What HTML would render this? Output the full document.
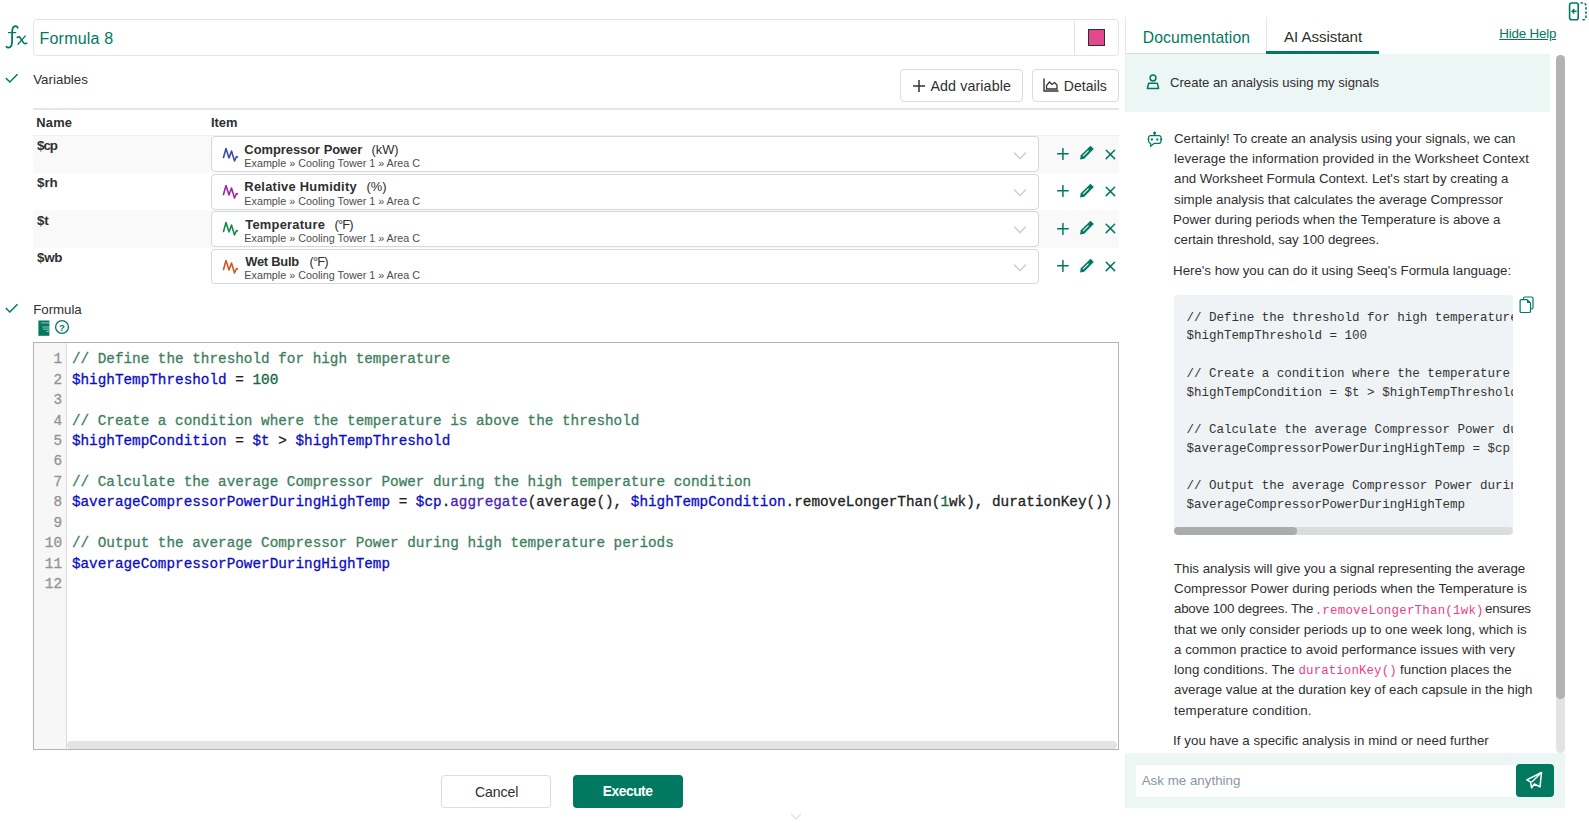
<!DOCTYPE html>
<html><head><meta charset="utf-8">
<style>
*{box-sizing:border-box;margin:0;padding:0}
html,body{width:1589px;height:823px;overflow:hidden;background:#fff;font-family:"Liberation Sans",sans-serif;color:#2f2f2f}
.a{position:absolute}
.nw{white-space:nowrap}
.teal{color:#007960}
.btn{position:absolute;border:1px solid #d9dde1;border-radius:4px;background:#fff}
.sel{position:absolute;border:1px solid #d3d8dd;border-radius:4px;background:#fff}
.code{font-family:"Liberation Mono",monospace;font-size:14.33px;-webkit-text-stroke:0.3px currentColor}
.code div{position:absolute;height:20px;line-height:20px;white-space:pre}
.cm{color:#3f7f5f}.vb{color:#0d0dc4}.nm{color:#116644}.fn{color:#4b1fb0}.pn{color:#222}
.ln{color:#939393;text-align:right}
.p{font-size:13.3px;line-height:16px;color:#333}
.cb{font-family:"Liberation Mono",monospace;font-size:12.55px;color:#333}
.cb div{position:absolute;white-space:pre;line-height:16px}
.ic{color:#e83e8c;font-family:"Liberation Mono",monospace;font-size:12.4px;line-height:16px}
</style></head><body>

<svg class="a" style="left:0;top:0" width="32" height="52" viewBox="0 0 32 52"><path d="M17.7 27.8C17.3 26.4 15.9 25.8 14.5 26.3C12.8 27 12.3 28.9 12.2 31.5L12 42.5C11.9 45.6 10.6 47.4 8.6 47.6C7.4 47.7 6.7 47.2 6.4 46.7" fill="none" stroke="#007960" stroke-width="1.8" stroke-linecap="round"/><path d="M8 32.6H16.2" stroke="#007960" stroke-width="1.2"/><path d="M17.3 37.4C18.6 36.4 19.7 36.8 20.6 38.4L23.4 42.6C24.3 43.9 25.4 43.9 26.7 43.1" fill="none" stroke="#007960" stroke-width="1.7" stroke-linecap="round"/><path d="M25.4 35.9L18 44.3" stroke="#007960" stroke-width="1.3" stroke-linecap="round"/></svg>
<div class="a" style="left:33px;top:19px;width:1086px;height:37px;border:1px solid #e2e4e7;border-radius:4px"></div>
<div class="a" style="left:1074px;top:20px;width:1px;height:35px;background:#e2e4e7"></div>
<div class="a" style="left:1088px;top:29px;width:17px;height:17px;background:#e0498c;border:1px solid #2f2f2f"></div>
<div id="f8" class="a nw" style="left:39.55px;top:29.00px;letter-spacing:0.203px;font-size:16px;line-height:20px;color:#007960">Formula 8</div>
<svg class="a" style="left:5px;top:73px" width="14" height="11" viewBox="0 0 14 11"><path d="M0.8 5 L4.8 9 L12.5 1.2" fill="none" stroke="#007960" stroke-width="1.5"/></svg>
<div id="vars" class="a nw" style="left:33.18px;top:71.60px;letter-spacing:0.034px;font-size:13.3px;line-height:16px">Variables</div>
<div class="btn" style="left:900px;top:69px;width:123px;height:33px"></div>
<svg class="a" style="left:912px;top:79px" width="14" height="14" viewBox="0 0 14 14"><path d="M7 1V13M1 7H13" stroke="#333" stroke-width="1.5"/></svg>
<div id="addv" class="a nw" style="left:930.45px;top:78.30px;letter-spacing:0.090px;font-size:14.3px;line-height:17px">Add variable</div>
<div class="btn" style="left:1032px;top:69px;width:87px;height:33px"></div>
<svg class="a" style="left:1043px;top:78px" width="16" height="14" viewBox="0 0 16 14"><path d="M1 0.5V13H15.5" fill="none" stroke="#333" stroke-width="1.4"/><path d="M3.5 11V7.5L6.5 4L9 6.5L11.5 4.5L14 7V11Z" fill="none" stroke="#333" stroke-width="1.3"/></svg>
<div id="det" class="a nw" style="left:1063.82px;top:78.30px;letter-spacing:0.030px;font-size:14px;line-height:17px">Details</div>
<div class="a" style="left:33px;top:108px;width:1086px;height:2px;background:#e3e7eb"></div>
<div id="hname" class="a nw" style="left:36.18px;top:115.00px;letter-spacing:0.240px;font-size:12.9px;line-height:16px;font-weight:bold">Name</div>
<div id="hitem" class="a nw" style="left:211.00px;top:115.00px;font-size:12.9px;line-height:16px;font-weight:bold">Item</div>
<div class="a" style="left:33px;top:135px;width:1086px;height:1px;background:#eef0f2"></div>
<div class="a" style="left:33px;top:135.6px;width:1086px;height:37.4px;background:#f9f9f9"></div>
<div id="rn0" class="a nw" style="left:37.08px;top:138.00px;letter-spacing:-1.080px;font-size:13.4px;line-height:16px;font-weight:bold">$cp</div>
<div class="sel" style="left:211px;top:136.4px;width:828px;height:35.8px"></div>
<svg class="a" style="left:222px;top:146.6px" width="17" height="16" viewBox="0 0 17 16"><path d="M1.5 10.5L4 1.5L7 11L9.5 4L12.5 14L14.5 9.5L15.5 10" fill="none" stroke="#3b4fa8" stroke-width="1.6" stroke-linejoin="round" stroke-linecap="round"/></svg>
<div id="rt0" class="a nw" style="left:244.36px;top:141.80px;letter-spacing:-0.018px;font-size:12.9px;line-height:16px;font-weight:bold">Compressor Power</div>
<div id="ru0" class="a nw" style="left:371.49px;top:141.80px;letter-spacing:-0.030px;font-size:12.9px;line-height:16px">(kW)</div>
<div id="re0" class="a nw" style="left:244.36px;top:157.10px;letter-spacing:0.008px;font-size:10.76px;line-height:13px;color:#4d4d4d">Example » Cooling Tower 1 » Area C</div>
<svg class="a" style="left:1013px;top:150.6px" width="14" height="9" viewBox="0 0 14 9"><path d="M1 1.5L7 7.5L13 1.5" fill="none" stroke="#cfd3d7" stroke-width="1.6"/></svg>
<svg class="a" style="left:1056.5px;top:147.8px" width="12" height="12" viewBox="0 0 12 12"><path d="M5.9 0.6V11.4M0.6 5.8H11.2" stroke="#007960" stroke-width="1.5" stroke-linecap="round"/></svg>
<svg class="a" style="left:1079px;top:145.3px" width="16" height="15" viewBox="0 0 16 15"><path d="M11.5 0.8L14.8 4.1L5.2 13.7L1 14.5L1.8 10.3Z" fill="#007960"/><path d="M4 11.2L9.5 5.7" stroke="#fff" stroke-width="1.1"/></svg>
<svg class="a" style="left:1105.3px;top:148.5px" width="11" height="11" viewBox="0 0 11 11"><path d="M1.2 1.2L9.6 9.6M9.6 1.2L1.2 9.6" stroke="#007960" stroke-width="1.5" stroke-linecap="round"/></svg>
<div id="rn1" class="a nw" style="left:37.08px;top:175.40px;letter-spacing:-0.090px;font-size:13.4px;line-height:16px;font-weight:bold">$rh</div>
<div class="sel" style="left:211px;top:173.8px;width:828px;height:35.8px"></div>
<svg class="a" style="left:222px;top:184.0px" width="17" height="16" viewBox="0 0 17 16"><path d="M1.5 10.5L4 1.5L7 11L9.5 4L12.5 14L14.5 9.5L15.5 10" fill="none" stroke="#9c2a9e" stroke-width="1.6" stroke-linejoin="round" stroke-linecap="round"/></svg>
<div id="rt1" class="a nw" style="left:244.36px;top:179.20px;letter-spacing:0.259px;font-size:12.9px;line-height:16px;font-weight:bold">Relative Humidity</div>
<div id="ru1" class="a nw" style="left:366.50px;top:179.20px;font-size:12.9px;line-height:16px">(%)</div>
<div id="re1" class="a nw" style="left:244.36px;top:194.50px;letter-spacing:0.008px;font-size:10.76px;line-height:13px;color:#4d4d4d">Example » Cooling Tower 1 » Area C</div>
<svg class="a" style="left:1013px;top:188.0px" width="14" height="9" viewBox="0 0 14 9"><path d="M1 1.5L7 7.5L13 1.5" fill="none" stroke="#cfd3d7" stroke-width="1.6"/></svg>
<svg class="a" style="left:1056.5px;top:185.2px" width="12" height="12" viewBox="0 0 12 12"><path d="M5.9 0.6V11.4M0.6 5.8H11.2" stroke="#007960" stroke-width="1.5" stroke-linecap="round"/></svg>
<svg class="a" style="left:1079px;top:182.7px" width="16" height="15" viewBox="0 0 16 15"><path d="M11.5 0.8L14.8 4.1L5.2 13.7L1 14.5L1.8 10.3Z" fill="#007960"/><path d="M4 11.2L9.5 5.7" stroke="#fff" stroke-width="1.1"/></svg>
<svg class="a" style="left:1105.3px;top:185.9px" width="11" height="11" viewBox="0 0 11 11"><path d="M1.2 1.2L9.6 9.6M9.6 1.2L1.2 9.6" stroke="#007960" stroke-width="1.5" stroke-linecap="round"/></svg>
<div class="a" style="left:33px;top:210.4px;width:1086px;height:37.4px;background:#f9f9f9"></div>
<div id="rn2" class="a nw" style="left:37.08px;top:212.80px;letter-spacing:-0.360px;font-size:13.4px;line-height:16px;font-weight:bold">$t</div>
<div class="sel" style="left:211px;top:211.2px;width:828px;height:35.8px"></div>
<svg class="a" style="left:222px;top:221.4px" width="17" height="16" viewBox="0 0 17 16"><path d="M1.5 10.5L4 1.5L7 11L9.5 4L12.5 14L14.5 9.5L15.5 10" fill="none" stroke="#1a8a4a" stroke-width="1.6" stroke-linejoin="round" stroke-linecap="round"/></svg>
<div id="rt2" class="a nw" style="left:245.26px;top:216.60px;letter-spacing:0.243px;font-size:12.9px;line-height:16px;font-weight:bold">Temperature</div>
<div id="ru2" class="a nw" style="left:334.47px;top:216.60px;letter-spacing:-0.810px;font-size:12.9px;line-height:16px">(°F)</div>
<div id="re2" class="a nw" style="left:244.36px;top:231.90px;letter-spacing:0.008px;font-size:10.76px;line-height:13px;color:#4d4d4d">Example » Cooling Tower 1 » Area C</div>
<svg class="a" style="left:1013px;top:225.4px" width="14" height="9" viewBox="0 0 14 9"><path d="M1 1.5L7 7.5L13 1.5" fill="none" stroke="#cfd3d7" stroke-width="1.6"/></svg>
<svg class="a" style="left:1056.5px;top:222.6px" width="12" height="12" viewBox="0 0 12 12"><path d="M5.9 0.6V11.4M0.6 5.8H11.2" stroke="#007960" stroke-width="1.5" stroke-linecap="round"/></svg>
<svg class="a" style="left:1079px;top:220.1px" width="16" height="15" viewBox="0 0 16 15"><path d="M11.5 0.8L14.8 4.1L5.2 13.7L1 14.5L1.8 10.3Z" fill="#007960"/><path d="M4 11.2L9.5 5.7" stroke="#fff" stroke-width="1.1"/></svg>
<svg class="a" style="left:1105.3px;top:223.3px" width="11" height="11" viewBox="0 0 11 11"><path d="M1.2 1.2L9.6 9.6M9.6 1.2L1.2 9.6" stroke="#007960" stroke-width="1.5" stroke-linecap="round"/></svg>
<div id="rn3" class="a nw" style="left:37.08px;top:250.20px;letter-spacing:-0.360px;font-size:13.4px;line-height:16px;font-weight:bold">$wb</div>
<div class="sel" style="left:211px;top:248.6px;width:828px;height:35.8px"></div>
<svg class="a" style="left:222px;top:258.8px" width="17" height="16" viewBox="0 0 17 16"><path d="M1.5 10.5L4 1.5L7 11L9.5 4L12.5 14L14.5 9.5L15.5 10" fill="none" stroke="#d4572a" stroke-width="1.6" stroke-linejoin="round" stroke-linecap="round"/></svg>
<div id="rt3" class="a nw" style="left:245.26px;top:254.00px;letter-spacing:-0.244px;font-size:12.9px;line-height:16px;font-weight:bold">Wet Bulb</div>
<div id="ru3" class="a nw" style="left:309.45px;top:254.00px;letter-spacing:-0.810px;font-size:12.9px;line-height:16px">(°F)</div>
<div id="re3" class="a nw" style="left:244.36px;top:269.30px;letter-spacing:0.008px;font-size:10.76px;line-height:13px;color:#4d4d4d">Example » Cooling Tower 1 » Area C</div>
<svg class="a" style="left:1013px;top:262.8px" width="14" height="9" viewBox="0 0 14 9"><path d="M1 1.5L7 7.5L13 1.5" fill="none" stroke="#cfd3d7" stroke-width="1.6"/></svg>
<svg class="a" style="left:1056.5px;top:260.0px" width="12" height="12" viewBox="0 0 12 12"><path d="M5.9 0.6V11.4M0.6 5.8H11.2" stroke="#007960" stroke-width="1.5" stroke-linecap="round"/></svg>
<svg class="a" style="left:1079px;top:257.5px" width="16" height="15" viewBox="0 0 16 15"><path d="M11.5 0.8L14.8 4.1L5.2 13.7L1 14.5L1.8 10.3Z" fill="#007960"/><path d="M4 11.2L9.5 5.7" stroke="#fff" stroke-width="1.1"/></svg>
<svg class="a" style="left:1105.3px;top:260.7px" width="11" height="11" viewBox="0 0 11 11"><path d="M1.2 1.2L9.6 9.6M9.6 1.2L1.2 9.6" stroke="#007960" stroke-width="1.5" stroke-linecap="round"/></svg>
<svg class="a" style="left:5px;top:303px" width="14" height="11" viewBox="0 0 14 11"><path d="M0.8 5 L4.8 9 L12.5 1.2" fill="none" stroke="#007960" stroke-width="1.5"/></svg>
<div id="form" class="a nw" style="left:33.27px;top:301.60px;letter-spacing:-0.060px;font-size:13.3px;line-height:16px">Formula</div>
<svg class="a" style="left:38px;top:320px" width="12" height="16" viewBox="0 0 12 16"><path d="M0.4 0.5H11.4V15.8H0.4Z" fill="#007960"/><path d="M3 2.9H11.4M4.3 7H11.4M4.9 9.1H11.4M8 11.3H11.4" stroke="#fff" stroke-width="0.8" opacity="0.75"/></svg>
<svg class="a" style="left:54px;top:319px" width="16" height="16" viewBox="0 0 16 16"><circle cx="8" cy="8" r="6.4" fill="none" stroke="#007960" stroke-width="1.3"/><text x="8" y="11.5" text-anchor="middle" font-family="Liberation Sans" font-weight="bold" font-size="9.5" fill="#007960">?</text></svg>
<div class="a" style="left:33px;top:342px;width:1086px;height:408px;border:1px solid #b3b3b3;background:#fff"></div>
<div class="a" style="left:34px;top:343px;width:33px;height:406px;background:#f7f7f7;border-right:1px solid #ddd"></div>
<div class="a" style="left:67px;top:741px;width:1050px;height:8px;background:#e3e3e3;border-radius:4px"></div>
<div class="code">
<div class="ln" style="left:34px;width:28px;top:349.20px">1</div>
<div style="left:71.9px;top:349.20px"><span class="cm">// Define the threshold for high temperature</span></div>
<div class="ln" style="left:34px;width:28px;top:369.64px">2</div>
<div style="left:71.9px;top:369.64px"><span class="vb">$highTempThreshold</span><span class="pn"> = </span><span class="nm">100</span></div>
<div class="ln" style="left:34px;width:28px;top:390.08px">3</div>
<div style="left:71.9px;top:390.08px"></div>
<div class="ln" style="left:34px;width:28px;top:410.52px">4</div>
<div style="left:71.9px;top:410.52px"><span class="cm">// Create a condition where the temperature is above the threshold</span></div>
<div class="ln" style="left:34px;width:28px;top:430.96px">5</div>
<div style="left:71.9px;top:430.96px"><span class="vb">$highTempCondition</span><span class="pn"> = </span><span class="vb">$t</span><span class="pn"> &gt; </span><span class="vb">$highTempThreshold</span></div>
<div class="ln" style="left:34px;width:28px;top:451.40px">6</div>
<div style="left:71.9px;top:451.40px"></div>
<div class="ln" style="left:34px;width:28px;top:471.84px">7</div>
<div style="left:71.9px;top:471.84px"><span class="cm">// Calculate the average Compressor Power during the high temperature condition</span></div>
<div class="ln" style="left:34px;width:28px;top:492.28px">8</div>
<div style="left:71.9px;top:492.28px"><span class="vb">$averageCompressorPowerDuringHighTemp</span><span class="pn"> = </span><span class="vb">$cp</span><span class="pn">.</span><span class="fn">aggregate</span><span class="pn">(average(), </span><span class="vb">$highTempCondition</span><span class="pn">.removeLongerThan(</span><span class="nm">1</span><span class="pn">wk), durationKey())</span></div>
<div class="ln" style="left:34px;width:28px;top:512.72px">9</div>
<div style="left:71.9px;top:512.72px"></div>
<div class="ln" style="left:34px;width:28px;top:533.16px">10</div>
<div style="left:71.9px;top:533.16px"><span class="cm">// Output the average Compressor Power during high temperature periods</span></div>
<div class="ln" style="left:34px;width:28px;top:553.60px">11</div>
<div style="left:71.9px;top:553.60px"><span class="vb">$averageCompressorPowerDuringHighTemp</span></div>
<div class="ln" style="left:34px;width:28px;top:574.04px">12</div>
<div style="left:71.9px;top:574.04px"></div>
</div>
<div class="btn" style="left:441px;top:775px;width:110px;height:33px"></div>
<div id="cancel" class="a nw" style="left:475.00px;top:783.70px;letter-spacing:-0.090px;font-size:14.1px;line-height:17px">Cancel</div>
<div class="a" style="left:573px;top:775px;width:110px;height:33px;background:#007960;border-radius:4px"></div>
<div id="exec" class="a nw" style="left:602.87px;top:782.60px;letter-spacing:-0.480px;font-size:13.8px;line-height:17px;color:#fff;font-weight:bold">Execute</div>
<svg class="a" style="left:790px;top:813px" width="12" height="8" viewBox="0 0 12 8"><path d="M1 1L6 6L11 1" fill="none" stroke="#dfe3e6" stroke-width="1.4"/></svg>
<div class="a" style="left:1125px;top:17px;width:1px;height:37px;background:#e6e6e6"></div>
<div class="a" style="left:1266px;top:17px;width:1px;height:37px;background:#e6e6e6"></div>
<div class="a" style="left:1125px;top:53px;width:141px;height:1px;background:#dcdcdc"></div>
<div class="a" style="left:1266px;top:51px;width:113px;height:3px;background:#007960"></div>
<div id="doc" class="a nw" style="left:1142.73px;top:28.00px;letter-spacing:0.150px;font-size:15.7px;line-height:19px;color:#007960">Documentation</div>
<div id="ai" class="a nw" style="left:1284.00px;top:27.00px;letter-spacing:-0.065px;font-size:15.1px;line-height:19px">AI Assistant</div>
<div id="hide" class="a nw" style="left:1499.26px;top:26.00px;letter-spacing:-0.214px;font-size:13.4px;line-height:16px;text-decoration:underline;color:#007960">Hide Help</div>
<svg class="a" style="left:1568px;top:2px" width="20" height="19" viewBox="0 0 20 19"><rect x="1.6" y="1" width="8.6" height="16.8" rx="2" fill="none" stroke="#007960" stroke-width="1.6"/><path d="M8.6 9.2H4.2M6.3 7L4.1 9.2L6.3 11.4" fill="none" stroke="#007960" stroke-width="1.4"/><path d="M13.2 1H14.5Q18 1 18 4.5V14.3Q18 17.8 14.5 17.8H13.2" fill="none" stroke="#007960" stroke-width="1.6" stroke-dasharray="1.2 2.9" stroke-linecap="round"/></svg>
<div class="a" style="left:1125px;top:54px;width:425px;height:58px;background:#ecf6f4"></div>
<svg class="a" style="left:1146px;top:74px" width="14" height="16" viewBox="0 0 14 16"><circle cx="7" cy="4" r="2.9" fill="none" stroke="#007960" stroke-width="1.5"/><path d="M2.7 9.2H11.3L12.6 14.5H1.4Z" fill="none" stroke="#007960" stroke-width="1.5" stroke-linejoin="round"/></svg>
<div id="user" class="a nw" style="left:1170.05px;top:74.80px;letter-spacing:0.005px;font-size:13.1px;line-height:16px">Create an analysis using my signals</div>
<div class="a" style="left:1556px;top:55px;width:9px;height:698px;background:#e3e3e3;border-radius:4.5px"></div>
<div class="a" style="left:1556px;top:55px;width:9px;height:644px;background:#b3b3b3;border-radius:4.5px"></div>
<svg class="a" style="left:1146px;top:130px" width="18" height="18" viewBox="0 0 18 18"><circle cx="8.6" cy="2.9" r="1.5" fill="#007960"/><path d="M8.6 4.2V5.6" stroke="#007960" stroke-width="1.3"/><path d="M4.6 5.6H13Q15 5.6 15 7.6V11.3Q15 13.3 13 13.3H8.2L4.6 16.3V13.3Q2.6 13.1 2.6 11.3V7.6Q2.6 5.6 4.6 5.6Z" fill="none" stroke="#007960" stroke-width="1.2" stroke-linejoin="round"/><circle cx="5.9" cy="9.5" r="1.15" fill="#007960"/><circle cx="11.3" cy="9.5" r="1.15" fill="#007960"/><path d="M2.6 8.2Q0.7 9.4 2.6 10.6ZM15 8.2Q16.9 9.4 15 10.6Z" fill="#007960" stroke="#007960" stroke-width="0.6"/></svg>
<div id="p1_0" class="a nw" style="left:1174.00px;top:130.60px;letter-spacing:-0.048px;font-size:13.3px;line-height:16px">Certainly! To create an analysis using your signals, we can</div>
<div id="p1_1" class="a nw" style="left:1174.00px;top:150.97px;letter-spacing:0.084px;font-size:13.3px;line-height:16px">leverage the information provided in the Worksheet Context</div>
<div id="p1_2" class="a nw" style="left:1174.00px;top:171.34px;letter-spacing:-0.020px;font-size:13.3px;line-height:16px">and Worksheet Formula Context. Let&#x27;s start by creating a</div>
<div id="p1_3" class="a nw" style="left:1174.00px;top:191.71px;font-size:13.3px;line-height:16px">simple analysis that calculates the average Compressor</div>
<div id="p1_4" class="a nw" style="left:1173.10px;top:212.08px;letter-spacing:0.032px;font-size:13.3px;line-height:16px">Power during periods when the Temperature is above a</div>
<div id="p1_5" class="a nw" style="left:1174.00px;top:232.45px;letter-spacing:-0.077px;font-size:13.3px;line-height:16px">certain threshold, say 100 degrees.</div>
<div id="heres" class="a nw" style="left:1173.10px;top:262.60px;letter-spacing:-0.022px;font-size:13.3px;line-height:16px">Here&#x27;s how you can do it using Seeq&#x27;s Formula language:</div>
<div class="a" style="left:1174px;top:295px;width:339px;height:240px;background:#f0f3f6;border-radius:4px;overflow:hidden">
<div class="cb">
<div style="left:12.4px;top:14.70px">// Define the threshold for high temperature</div>
<div style="left:12.4px;top:33.40px">$highTempThreshold = 100</div>
<div style="left:12.4px;top:52.10px"></div>
<div style="left:12.4px;top:70.80px">// Create a condition where the temperature is above the threshold</div>
<div style="left:12.4px;top:89.50px">$highTempCondition = $t &gt; $highTempThreshold</div>
<div style="left:12.4px;top:108.20px"></div>
<div style="left:12.4px;top:126.90px">// Calculate the average Compressor Power during the high temperature condition</div>
<div style="left:12.4px;top:145.60px">$averageCompressorPowerDuringHighTemp = $cp.aggregate(average(), $highTempCondition.removeLongerThan(1wk), durationKey())</div>
<div style="left:12.4px;top:164.30px"></div>
<div style="left:12.4px;top:183.00px">// Output the average Compressor Power during high temperature periods</div>
<div style="left:12.4px;top:201.70px">$averageCompressorPowerDuringHighTemp</div>
</div>
<div class="a" style="left:0;top:232px;width:339px;height:8px;background:#dadde0;border-radius:4px"></div>
<div class="a" style="left:0;top:232px;width:123px;height:8px;background:#a9adb0;border-radius:4px"></div>
</div>
<svg class="a" style="left:1519px;top:296px" width="16" height="18" viewBox="0 0 16 18"><path d="M4.5 3.2V2.4Q4.5 1 5.9 1H12.6Q14 1 14 2.4V11.6Q14 13 12.6 13H12" fill="none" stroke="#007960" stroke-width="1.2"/><path d="M2.4 3.6H8L11.5 7.1V15.2Q11.5 16.5 10.2 16.5H2.4Q1.1 16.5 1.1 15.2V4.9Q1.1 3.6 2.4 3.6Z" fill="none" stroke="#007960" stroke-width="1.2"/><path d="M8 3.6L11.5 7.1H8Z" fill="#007960"/></svg>
<div id="p2_0" class="a nw" style="left:1174.00px;top:560.60px;letter-spacing:-0.036px;font-size:13.3px;line-height:16px">This analysis will give you a signal representing the average</div>
<div id="p2_1" class="a nw" style="left:1174.00px;top:580.90px;letter-spacing:0.040px;font-size:13.3px;line-height:16px">Compressor Power during periods when the Temperature is</div>
<div id="p2_2a" class="a nw" style="left:1174.00px;top:601.20px;letter-spacing:-0.214px;font-size:13.3px;line-height:16px">above 100 degrees. The</div>
<div id="p2_2c" class="a nw" style="left:1314.70px;top:602.50px;letter-spacing:0.250px;font-size:12.4px;line-height:16px;color:#e83e8c;font-family:'Liberation Mono',monospace">.removeLongerThan(1wk)</div>
<div id="p2_2e" class="a nw" style="left:1485.05px;top:601.20px;letter-spacing:-0.225px;font-size:13.3px;line-height:16px">ensures</div>
<div id="p2_3" class="a nw" style="left:1174.00px;top:621.50px;letter-spacing:0.053px;font-size:13.3px;line-height:16px">that we only consider periods up to one week long, which is</div>
<div id="p2_4" class="a nw" style="left:1174.00px;top:641.80px;letter-spacing:0.043px;font-size:13.3px;line-height:16px">a common practice to avoid performance issues with very</div>
<div id="p2_5a" class="a nw" style="left:1174.00px;top:662.10px;letter-spacing:0.104px;font-size:13.3px;line-height:16px">long conditions. The</div>
<div id="p2_5c" class="a nw" style="left:1298.52px;top:663.40px;letter-spacing:0.120px;font-size:12.4px;line-height:16px;color:#e83e8c;font-family:'Liberation Mono',monospace">durationKey()</div>
<div id="p2_5e" class="a nw" style="left:1399.96px;top:662.10px;letter-spacing:0.045px;font-size:13.3px;line-height:16px">function places the</div>
<div id="p2_6" class="a nw" style="left:1174.00px;top:682.40px;letter-spacing:-0.002px;font-size:13.3px;line-height:16px">average value at the duration key of each capsule in the high</div>
<div id="p2_7" class="a nw" style="left:1174.00px;top:702.70px;letter-spacing:0.249px;font-size:13.3px;line-height:16px">temperature condition.</div>
<div id="last" class="a nw" style="left:1173.10px;top:733.20px;letter-spacing:0.042px;font-size:13.3px;line-height:16px">If you have a specific analysis in mind or need further</div>
<div class="a" style="left:1125px;top:753px;width:440px;height:55px;background:#ecf6f4"></div>
<div class="a" style="left:1136px;top:765px;width:380px;height:32px;background:#fff"></div>
<div id="ask" class="a nw" style="left:1141.72px;top:773.00px;letter-spacing:0.026px;font-size:13.3px;line-height:16px;color:#8a94a6">Ask me anything</div>
<div class="a" style="left:1516px;top:764px;width:38px;height:33px;background:#007960;border-radius:4px"></div>
<svg class="a" style="left:1525px;top:771px" width="18" height="19" viewBox="0 0 18 19"><path d="M16.5 1.5L1.8 8.8L5.5 10.8L6.6 16.8L9.4 13L15 15.8Z" fill="none" stroke="#fff" stroke-width="1.5" stroke-linejoin="round"/><path d="M16.5 1.5L6.6 11.2" stroke="#fff" stroke-width="1.3"/></svg>
</body></html>
